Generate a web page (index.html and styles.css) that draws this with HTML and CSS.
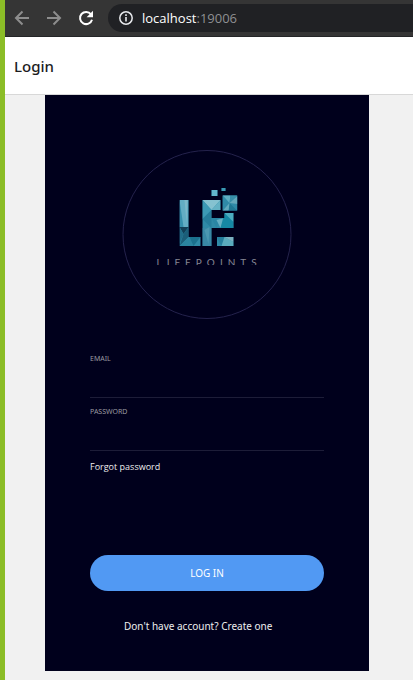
FILE: index.html
```html
<!DOCTYPE html>
<html lang="en">
<head>
<meta charset="utf-8">
<meta name="viewport" content="width=device-width, initial-scale=1">
<title>Login</title>
<link rel="stylesheet" href="styles.css">
</head>
<body>
<div class="window">
  <nav class="toolbar" aria-label="Browser">
    <button class="tool" type="button" aria-label="Back">
      <svg viewBox="0 0 16 16" fill="none" stroke="#8d8d8d" stroke-width="2"><path d="M15 8H2M8.500 1.500L2 8l6.500 6.500"/></svg>
    </button>
    <button class="tool" type="button" aria-label="Forward">
      <svg viewBox="0 0 16 16" fill="none" stroke="#8d8d8d" stroke-width="2"><path d="M1 8h13M7.500 1.500L14 8l-6.500 6.500"/></svg>
    </button>
    <button class="tool" type="button" aria-label="Reload">
      <svg viewBox="0 0 16 16"><path d="M13 4.300A6.100 6.100 0 1 0 14 9.700" fill="none" stroke="#fff" stroke-width="2"/><path d="M15 .8v6.400H8.600z" fill="#fff"/></svg>
    </button>
    <div class="address">
      <svg class="info" viewBox="0 0 14 14" aria-hidden="true"><circle cx="7" cy="7" r="6.200" fill="none" stroke="#e8eaed" stroke-width="1.500"/><path d="M6.200 6h1.600v4.500H6.200zM6.200 3.300h1.600v1.600H6.200z" fill="#e8eaed"/></svg>
      <span class="host">localhost<span class="port">:19006</span></span>
    </div>
  </nav>
  <header class="header"><h1 class="title">Login</h1></header>
  <main class="card">
    <svg class="logo" viewBox="0 0 169 169" role="img" aria-label="Lifepoints">
      <defs>
        <clipPath id="mark">
          <path d="M57 50h9v37h12v9H57zM80 50h18v10h-9v8h13v-5h9v15H89v18h-9zM94.500 87H111v9H94.500zM100 45.500h15v15h-15zM89 40h6v6h-6zM99 38h4v3h-4z"/>
        </clipPath>
        <clipPath id="wordmark"><path d="M30 100h115v15H30z"/></clipPath>
      </defs>
      <circle cx="84.500" cy="84.500" r="84" fill="none" stroke="#24224c"/>
      <g clip-path="url(#mark)">
        <path d="M55 35h62v63H55z" fill="#2f8aa7"/>
        <path d="M57 50h9v27h-9z" fill="#62adc4"/>
        <path d="M57 50l4 27h-4z" fill="#358fac"/>
        <path d="M62 50h3l-1 23z" fill="#7bb8ca"/>
        <path d="M57 77h9l-5 7z" fill="#123f57"/>
        <path d="M57 77l4 7-4 10z" fill="#216c88"/>
        <path d="M66 77v10l-9 9 4-12z" fill="#1b5e79"/>
        <path d="M57 96l10-9 4 9z" fill="#2b84a0"/>
        <path d="M67 87h11l-7 9z" fill="#1b718e"/>
        <path d="M80 50h18l-9 10z" fill="#85c2d0"/>
        <path d="M80 50l9 10-9 9z" fill="#3c9ab5"/>
        <path d="M98 50v10h-9z" fill="#65b2c4"/>
        <path d="M80 69l9-9v18z" fill="#267e9c"/>
        <path d="M80 78h9v18h-9z" fill="#3988a5"/>
        <path d="M82 80l5-3-1 17z" fill="#4b97b0"/>
        <path d="M89 68h8l-3 10z" fill="#2a86a4"/>
        <path d="M94 70l8-2-4 10z" fill="#66afc3"/>
        <path d="M98 78l4-15 9 9v6z" fill="#1688a4"/>
        <path d="M102 63h9v9z" fill="#4cadc0"/>
        <path d="M94 87h8l-3 9z" fill="#267e9c"/>
        <path d="M99 96l3-9 9 5v4z" fill="#5babbd"/>
        <path d="M102 87h9v5z" fill="#7db1c0"/>
        <path d="M100 45h8l-1 8z" fill="#5fadc2"/>
        <path d="M108 45h7l-8 8z" fill="#378fa8"/>
        <path d="M115 46v8l-8-1z" fill="#65a9bb"/>
        <path d="M107 53l8 8h-9z" fill="#1f7894"/>
        <path d="M100 61l7-8-1 8z" fill="#61aabd"/>
        <path d="M89 40h6v6h-6z" fill="#63b6cb"/>
        <path d="M99 38h4v3h-4z" fill="#3a9ab3"/>
      </g>
      <text class="wordmark" x="34" y="116" clip-path="url(#wordmark)">LIFEPOINTS</text>
    </svg>
    <form class="form">
      <label class="label" for="email">EMAIL</label>
      <input class="input" id="email" type="email">
      <label class="label" for="password">PASSWORD</label>
      <input class="input" id="password" type="password">
      <a class="forgot" href="#">Forgot password</a>
      <button class="submit" type="button">LOG IN</button>
      <a class="create" href="#">Don't have account? Create one</a>
    </form>
  </main>
</div>
</body>
</html>
```
FILE: styles.css
```css
* { box-sizing: border-box; }
body {
  margin: 0;
  background: #f1f1f1;
  color: #1c1c1e;
  font-family: "Noto Sans", "Open Sans", sans-serif;
}
.window {
  min-height: 100vh;
  border-left: 5px solid #8bbd27;
}
.toolbar {
  display: flex;
  align-items: center;
  gap: 16px;
  height: 37px;
  padding-left: 9px;
  background: #353535;
  border-bottom: 1px solid #242527;
}
.tool {
  flex: none;
  width: 16px;
  height: 16px;
  padding: 0;
  border: 0;
  background: none;
}
.tool svg { display: block; }
.address {
  flex: 1;
  display: flex;
  align-items: center;
  gap: 9px;
  height: 28px;
  margin-left: -2px;
  padding-left: 11px;
  border-radius: 14px 0 0 14px;
  background: #202124;
  color: #fff;
  font-family: "Open Sans", sans-serif;
  font-size: 13px;
}
.info { width: 14px; height: 14px; }
.port { color: #8f9092; }
.header {
  display: flex;
  align-items: center;
  height: 58px;
  padding-left: 9px;
  background: #fff;
  border-bottom: 1px solid #d8d8d8;
}
.title {
  margin: 0;
  font-size: 15px;
  font-weight: 500;
}
.card {
  margin: 0 44px 9px 40px;
  padding: 55px 45px 37px;
  background: #00001c;
  color: #eee;
}
.logo {
  display: block;
  width: 170px;
  height: 169px;
  margin: 0 auto 34px;
}
.wordmark {
  fill: #858693;
  font-family: Lato, sans-serif;
  font-size: 10px;
  letter-spacing: 5px;
}
.form {
  display: flex;
  flex-direction: column;
}
.label {
  color: #9a9aa0;
  font-size: 7px;
  line-height: 12px;
}
.input {
  width: 100%;
  height: 33px;
  margin-bottom: 8px;
  padding: 0;
  border: 0;
  border-bottom: 1px solid #1d1d38;
  outline: 0;
  background: none;
  color: #eee;
  font-size: 11px;
}
.forgot {
  align-self: flex-start;
  margin-bottom: 80px;
  color: inherit;
  font-family: "Open Sans", sans-serif;
  font-size: 9px;
  line-height: 16px;
  text-decoration: none;
}
.submit {
  height: 36px;
  margin-bottom: 27px;
  padding: 0;
  border: 0;
  border-radius: 18px;
  background: #5199f3;
  color: #fff;
  font-family: inherit;
  font-size: 10px;
}
.create {
  align-self: flex-start;
  margin-left: 34px;
  color: inherit;
  font-size: 10px;
  line-height: 16px;
  text-decoration: none;
}
```
